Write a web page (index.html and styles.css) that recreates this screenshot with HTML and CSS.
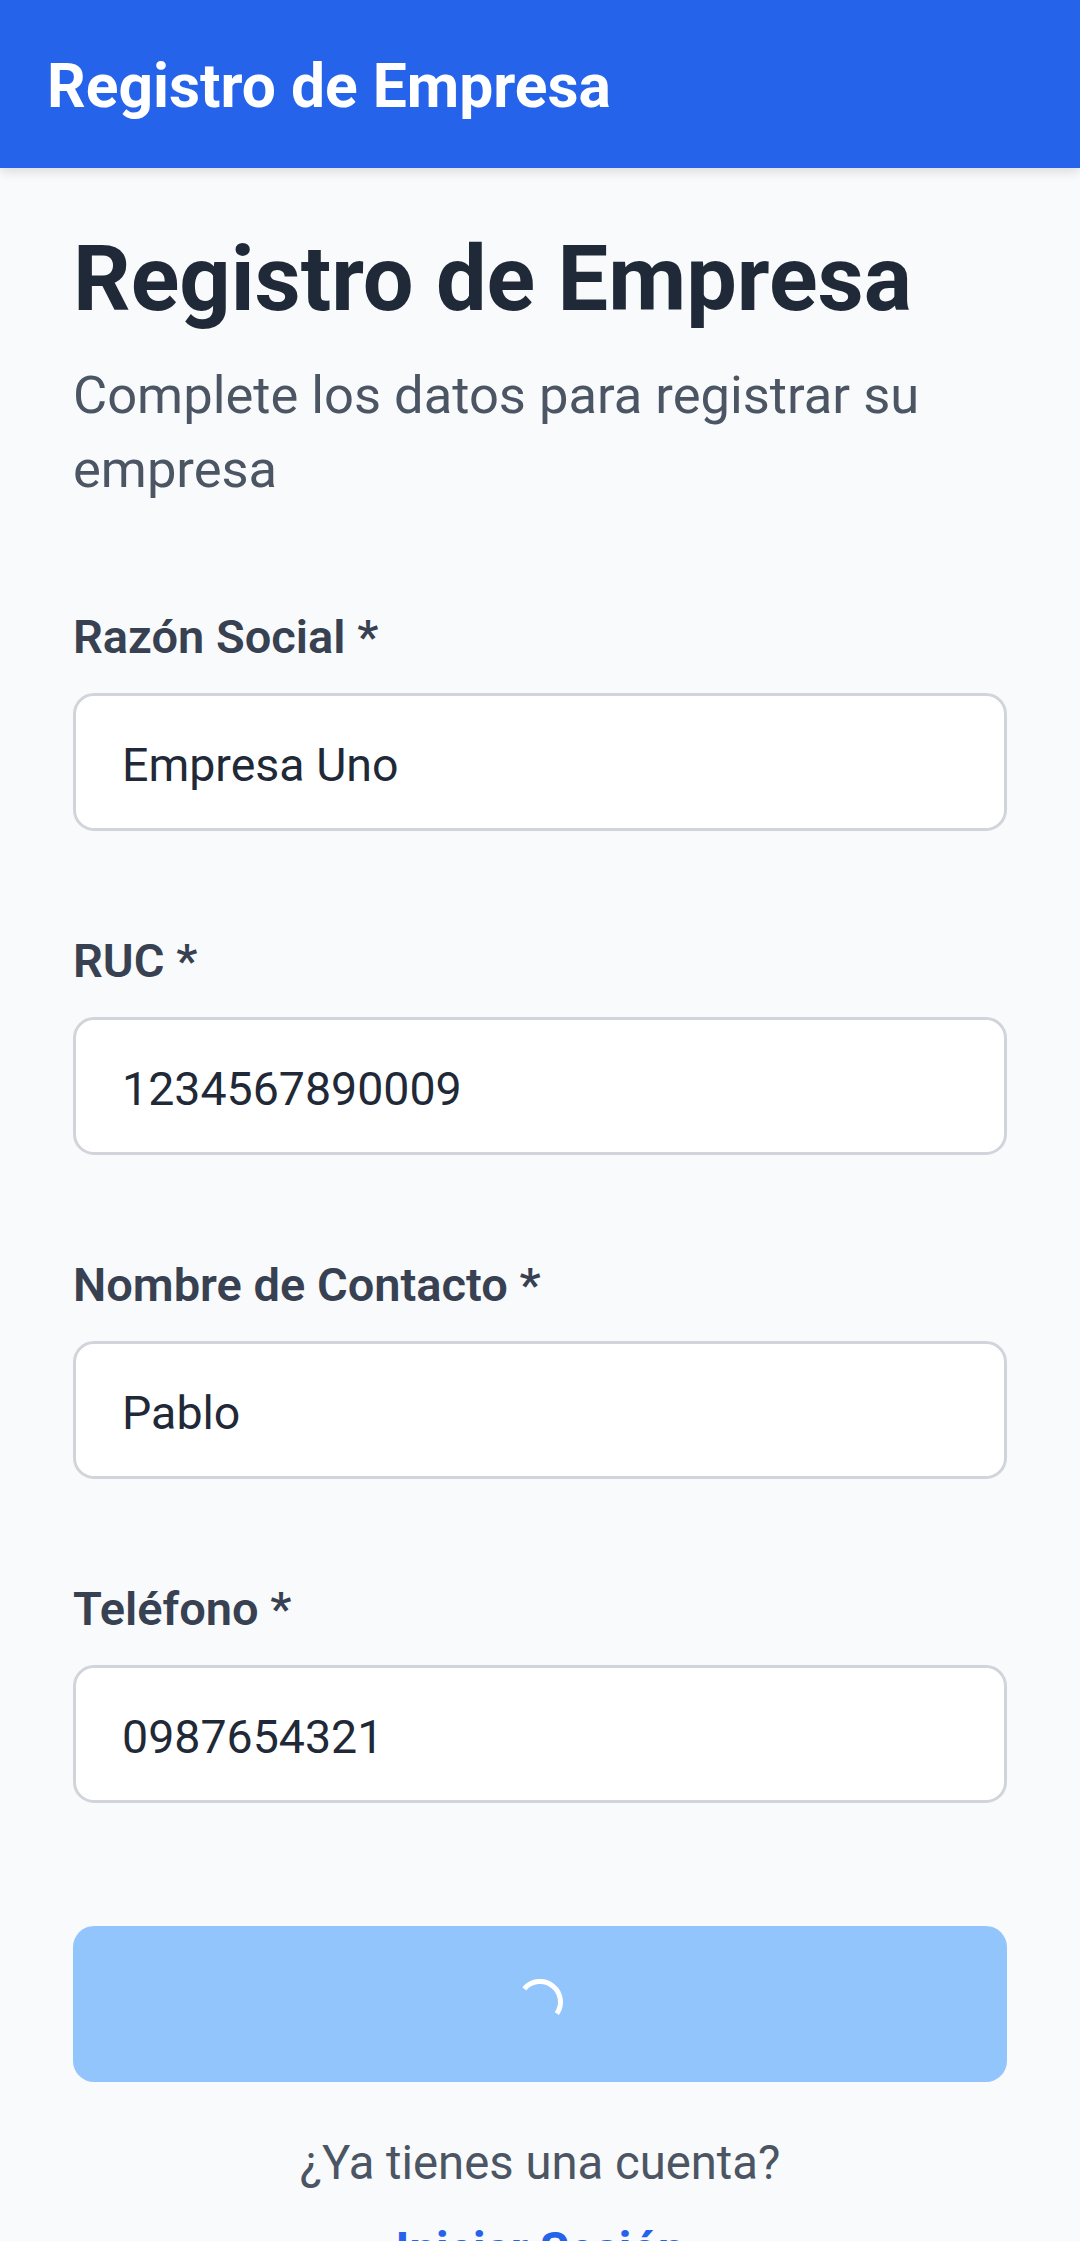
FILE: index.html
```html
<!DOCTYPE html>
<html lang="es">
<head>
<meta charset="utf-8">
<title>Registro de Empresa</title>
<link rel="stylesheet" href="styles.css">
</head>
<body>
<header class="appbar">
  <h1 class="appbar-title">Registro de Empresa</h1>
</header>
<main class="page">
  <h2 class="title">Registro de Empresa</h2>
  <p class="subtitle">Complete los datos para registrar su empresa</p>
  <form class="form">
    <div class="field">
      <label class="label" for="razon">Razón Social *</label>
      <input class="input" id="razon" type="text" value="Empresa Uno">
    </div>
    <div class="field">
      <label class="label" for="ruc">RUC *</label>
      <input class="input" id="ruc" type="text" value="1234567890009">
    </div>
    <div class="field">
      <label class="label" for="contacto">Nombre de Contacto *</label>
      <input class="input" id="contacto" type="text" value="Pablo">
    </div>
    <div class="field">
      <label class="label" for="telefono">Teléfono *</label>
      <input class="input" id="telefono" type="text" value="0987654321">
    </div>
    <button class="submit" type="button" disabled>
      <svg class="spinner" width="48" height="48" viewBox="0 0 48 48">
        <circle cx="24" cy="24" r="20.5" fill="none" stroke="#ffffff" stroke-width="5" stroke-dasharray="62 200" transform="rotate(-140 24 24)"/>
      </svg>
    </button>
  </form>
  <p class="login-text">¿Ya tienes una cuenta?</p>
  <a class="login-link" href="#">Iniciar Sesión</a>
</main>
</body>
</html>
```

FILE: styles.css
```css
* {
  box-sizing: border-box;
}

html, body {
  margin: 0;
  padding: 0;
}

body {
  background: #f9fafb;
  font-family: Roboto, "Noto Sans", "Liberation Sans", sans-serif;
  color: #1f2937;
}

.appbar {
  height: 168px;
  background: #2563eb;
  display: flex;
  align-items: center;
  padding-left: 47px;
  padding-top: 5px;
  box-shadow: 0 4px 10px rgba(0, 0, 0, 0.12);
  position: relative;
  z-index: 1;
}

.appbar-title {
  margin: 0;
  color: #ffffff;
  font-size: 60.5px;
  font-weight: 700;
  line-height: 84px;
}

.page {
  padding: 59px 73px 0;
}

.title {
  margin: 0;
  font-size: 90px;
  line-height: 105px;
  font-weight: 700;
  color: #1f2937;
}

.subtitle {
  margin: 27px 0 0;
  font-size: 52.5px;
  line-height: 73.5px;
  color: #4b5563;
}

.form {
  margin-top: 94px;
  display: flex;
  flex-direction: column;
}

.field {
  display: flex;
  flex-direction: column;
  margin-bottom: 93px;
}

.field:last-of-type {
  margin-bottom: 123px;
}

.label {
  font-size: 47px;
  line-height: 73.5px;
  font-weight: 600;
  color: #374151;
  margin-bottom: 19.5px;
}

.input {
  height: 138px;
  width: 100%;
  border: 3px solid #d1d5db;
  border-radius: 21px;
  background: #ffffff;
  padding: 6px 46px 0;
  font-family: Roboto, "Noto Sans", "Liberation Sans", sans-serif;
  font-size: 46.5px;
  color: #1f2937;
  outline: none;
}

.submit {
  height: 156px;
  width: 100%;
  border: none;
  border-radius: 21px;
  background: #93c5fd;
  display: flex;
  align-items: center;
  justify-content: center;
  padding: 0;
  padding-bottom: 4px;
}

.spinner {
  display: block;
}

.login-text {
  margin: 45px 0 0;
  text-align: center;
  font-size: 47.25px;
  line-height: 73.5px;
  color: #4b5563;
}

.login-link {
  display: block;
  margin-top: 13px;
  text-align: center;
  font-size: 47.25px;
  line-height: 73.5px;
  font-weight: 700;
  color: #2563eb;
  text-decoration: none;
}
```
